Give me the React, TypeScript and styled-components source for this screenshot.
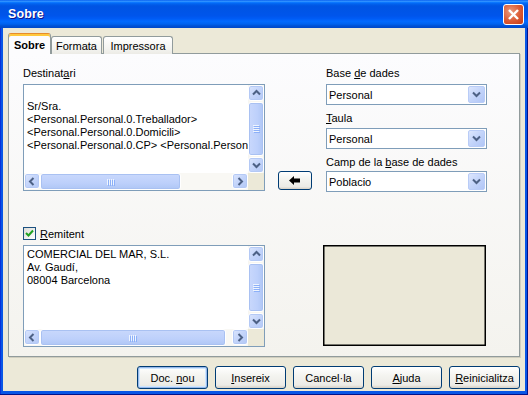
import React from 'react';
import styled, { createGlobalStyle } from 'styled-components';

const Global = createGlobalStyle`
  html, body { margin: 0; padding: 0; }
  body {
    width: 528px; height: 395px; overflow: hidden;
    font-family: "Liberation Sans", Arial, sans-serif;
    font-size: 11px; color: #000;
  }
  * { box-sizing: border-box; }
`;

const Window = styled.div`
  width: 528px; height: 395px;
  display: flex; flex-direction: column;
  background: #0856E6;
  box-shadow: inset -1px -1px #00138C, inset 1px 0 #0831D9;
`;

const TitleBar = styled.div`
  height: 28px; flex: none;
  display: flex; align-items: center; justify-content: space-between;
  padding: 0 3px 0 8px;
  background: linear-gradient(180deg, #0058EE 0%, #3593FF 4%, #288EFF 6%, #127DFF 8%, #036FFC 10%, #0262EE 14%, #0057E5 20%, #0054E3 24%, #0055EB 56%, #005BF5 66%, #026AFE 76%, #0062EF 86%, #0052D6 92%, #0048C8 100%);
`;

const Title = styled.span`
  color: #fff; font-weight: bold; font-size: 12.5px;
  text-shadow: 1px 1px #0F1089;
  letter-spacing: 0.1px;
`;

const CloseBtn = styled.div`
  width: 21px; height: 21px; margin-right: 1px;
  border: 1px solid #fff; border-radius: 3px;
  background: radial-gradient(circle at 35% 35%, #EB9A7E 0%, #DB5A34 55%, #C53B15 100%);
  display: flex; align-items: center; justify-content: center;
`;

const Body = styled.div`
  flex: 1;
  margin: 0 3px 4px 3px;
  background: #ECE9D8;
  padding: 5px 5px 2px 5px;
  display: flex; flex-direction: column;
`;

const TabStrip = styled.div`
  display: flex; align-items: flex-end;
  height: 21px; margin-bottom: -1px;
  position: relative; z-index: 1;
`;

const Tab = styled.div<{ $active?: boolean; $w: number; $ml?: number }>`
  width: ${p => p.$w}px;
  height: ${p => (p.$active ? 21 : 18)}px;
  margin-left: ${p => p.$ml ?? 0}px;
  border: 1px solid #919B9C;
  border-bottom: none;
  border-radius: 3px 3px 0 0;
  display: flex; align-items: center; justify-content: center;
  font-weight: ${p => (p.$active ? 'bold' : 'normal')};
  background: ${p => (p.$active ? '#FCFCFE' : 'linear-gradient(180deg, #FFFFFF, #F3F3EF 70%, #ECEBE6)')};
  ${p => p.$active && `
    border-top: 1px solid #E68B2C;
    box-shadow: inset 0 2px 0 #FFC83C;
    padding-top: 2px;
  `}
`;

const Panel = styled.div`
  height: 304px; flex: none;
  border: 1px solid #919B9C;
  background: linear-gradient(180deg, #FCFCFE, #F4F3EE);
  box-shadow: 1px 1px 0 #D0CEBF;
  padding: 13px 0 0 14px;
  display: flex; flex-direction: column;
`;

const Row = styled.div<{ $mt?: number }>`
  display: flex; align-items: flex-start;
  margin-top: ${p => p.$mt ?? 0}px;
`;

const Col = styled.div<{ $w: number }>`
  width: ${p => p.$w}px;
  display: flex; flex-direction: column;
`;

const Middle = styled.div`
  width: 61px; align-self: flex-end;
  padding-left: 13px; padding-bottom: 2px;
`;

const Label = styled.div<{ $mb?: number }>`
  height: 13px; line-height: 13px;
  margin-bottom: ${p => p.$mb ?? 4}px;
  white-space: nowrap;
`;

const ScrollBox = styled.div<{ $h: number }>`
  height: ${p => p.$h}px;
  border: 1px solid #7F9DB9;
  background: #fff;
  display: grid;
  grid-template-columns: 1fr 16px;
  grid-template-rows: 1fr 17px;
`;

const TextContent = styled.div`
  padding: 2px 3px;
  line-height: 13px;
  white-space: pre;
  overflow: hidden;
`;

const VTrack = styled.div`
  background: #F7F6F1;
  display: flex; flex-direction: column;
`;

const HTrack = styled.div`
  background: #F9F8F4;
  display: flex;
`;

const Spacer = styled.div`
  flex: 1;
`;

const SBtn = styled.div`
  width: 16px; height: 16px; flex: none;
  border: 1px solid #fff;
  border-radius: 3px;
  background: linear-gradient(135deg, #DCE6FD, #C3D4FA 50%, #B3C8F6);
  box-shadow: inset 0 0 0 1px #B4C9F5;
  display: flex; align-items: center; justify-content: center;
`;

const Thumb = styled.div<{ $vertical?: boolean }>`
  flex: ${p => (p.$vertical ? 1 : 'none')};
  margin: ${p => (p.$vertical ? '1px 0' : '0')};
  border: 1px solid #fff;
  border-radius: 3px;
  background: ${p => (p.$vertical
    ? 'linear-gradient(90deg, #C9D8FC, #BDD0FB 60%, #AFC6F5)'
    : 'linear-gradient(180deg, #C9D8FC, #BDD0FB 60%, #AFC6F5)')};
  box-shadow: inset 0 0 0 1px #A9C1F2;
  display: flex; align-items: center; justify-content: center;
`;

const Corner = styled.div`
  background: #ECE9D8;
`;

const Combo = styled.div<{ $mb?: number }>`
  height: 21px;
  border: 1px solid #7F9DB9;
  background: #fff;
  display: flex; align-items: center; justify-content: space-between;
  padding-left: 2px;
  margin-bottom: ${p => p.$mb ?? 0}px;
`;

const ComboBtn = styled.div`
  width: 17px; height: 17px; margin-right: 1px;
  border-radius: 2px;
  border: 1px solid #B9CCF7;
  background: linear-gradient(135deg, #DCE6FD, #C3D4FA 50%, #B1C6F6);
  display: flex; align-items: center; justify-content: center;
`;

const PushBtn = styled.div<{ $w: number; $h: number; $default?: boolean }>`
  width: ${p => p.$w}px; height: ${p => p.$h}px;
  border: 1px solid #003C74;
  border-radius: 3px;
  background: linear-gradient(180deg, #FFFFFF, #F4F4F0 40%, #ECEBE6 86%, #D6D0C5);
  display: flex; align-items: center; justify-content: center;
  white-space: nowrap;
  ${p => p.$default && `
    box-shadow: inset 0 0 0 1px #98B8EA, inset 0 0 0 2px #CEE7FF;
  `}
`;

const CheckRow = styled.div`
  display: flex; align-items: center; gap: 4px;
  height: 13px; margin-bottom: 5px;
`;

const CheckBox = styled.div`
  width: 13px; height: 13px;
  border: 1px solid #1C5180;
  background: linear-gradient(135deg, #DCDCD7, #FFFFFF);
  display: flex; align-items: center; justify-content: center;
`;

const Preview = styled.div`
  width: 163px; height: 101px;
  margin-top: 18px; margin-left: 58px;
  border: 1px solid #000;
  box-shadow: inset 0 0 0 0.5px #000;
  background: #EBE8D8;
`;

const ButtonRow = styled.div`
  display: flex; justify-content: flex-end; gap: 7px;
  margin-top: 9px;
`;

const Chevron = ({ dir }: { dir: 'up' | 'down' | 'left' | 'right' }) => {
  const pts = {
    up: '1,5.5 4.5,2 8,5.5',
    down: '1,2.5 4.5,6 8,2.5',
    left: '5.5,1 2,4.5 5.5,8',
    right: '2.5,1 6,4.5 2.5,8',
  }[dir];
  return (
    <svg width="9" height="9" viewBox="0 0 9 9">
      <polyline points={pts} fill="none" stroke="#4D6185" strokeWidth="2" />
    </svg>
  );
};

const Grip = ({ vertical }: { vertical?: boolean }) => (
  <svg width="8" height="8" viewBox="0 0 8 8">
    {[0, 2, 4, 6].map(i =>
      vertical ? (
        <g key={i}>
          <line x1="1" y1={i + 0.5} x2="7" y2={i + 0.5} stroke="#EEF4FE" />
          <line x1="2" y1={i + 1.5} x2="8" y2={i + 1.5} stroke="#8CB0F8" />
        </g>
      ) : (
        <g key={i}>
          <line x1={i + 0.5} y1="1" x2={i + 0.5} y2="7" stroke="#EEF4FE" />
          <line x1={i + 1.5} y1="2" x2={i + 1.5} y2="8" stroke="#8CB0F8" />
        </g>
      )
    )}
  </svg>
);

const TextBox = ({ h, lines, thumb }: { h: number; lines: string[]; thumb: number }) => (
  <ScrollBox $h={h}>
    <TextContent>{lines.join('\n')}</TextContent>
    <VTrack>
      <SBtn><Chevron dir="up" /></SBtn>
      <Thumb $vertical><Grip vertical /></Thumb>
      <SBtn><Chevron dir="down" /></SBtn>
    </VTrack>
    <HTrack>
      <SBtn><Chevron dir="left" /></SBtn>
      <Thumb style={{ width: `${thumb}px` }}><Grip /></Thumb>
      <Spacer />
      <SBtn><Chevron dir="right" /></SBtn>
    </HTrack>
    <Corner />
  </ScrollBox>
);

const ComboBox = ({ value, mb }: { value: string; mb?: number }) => (
  <Combo $mb={mb}>
    <span>{value}</span>
    <ComboBtn><Chevron dir="down" /></ComboBtn>
  </Combo>
);

export default function App() {
  return (
    <>
      <Global />
      <Window>
        <TitleBar>
          <Title>Sobre</Title>
          <CloseBtn>
            <svg width="13" height="13" viewBox="0 0 13 13">
              <line x1="2" y1="2" x2="11" y2="11" stroke="#fff" strokeWidth="2.4" />
              <line x1="11" y1="2" x2="2" y2="11" stroke="#fff" strokeWidth="2.4" />
            </svg>
          </CloseBtn>
        </TitleBar>
        <Body>
          <TabStrip>
            <Tab $active $w={43}>Sobre</Tab>
            <Tab $w={51}>Formata</Tab>
            <Tab $w={70} $ml={1}>Impressora</Tab>
          </TabStrip>
          <Panel>
            <Row>
              <Col $w={242}>
                <Label>Destinat<u>a</u>ri</Label>
                <TextBox
                  h={107}
                  thumb={141}
                  lines={[
                    '',
                    'Sr/Sra.',
                    '<Personal.Personal.0.Treballador>',
                    '<Personal.Personal.0.Domicili>',
                    '<Personal.Personal.0.CP> <Personal.Personal.0.Poblacio>',
                  ]}
                />
              </Col>
              <Middle>
                <PushBtn $w={34} $h={19}>
                  <svg width="12" height="9" viewBox="0 0 12 9">
                    <polygon points="0,4.5 5,0 5,2.5 11,2.5 11,6.5 5,6.5 5,9" fill="#000" />
                  </svg>
                </PushBtn>
              </Middle>
              <Col $w={161}>
                <Label>Base <u>d</u>e dades</Label>
                <ComboBox value="Personal" mb={7} />
                <Label $mb={3}><u>T</u>aula</Label>
                <ComboBox value="Personal" mb={7} />
                <Label $mb={2}>Camp de la <u>b</u>ase de dades</Label>
                <ComboBox value="Poblacio" />
              </Col>
            </Row>
            <Row $mt={35}>
              <Col $w={242}>
                <CheckRow>
                  <CheckBox>
                    <svg width="9" height="9" viewBox="0 0 9 9">
                      <polyline points="1,4 3.5,6.5 8,1.5" fill="none" stroke="#21A121" strokeWidth="2" />
                    </svg>
                  </CheckBox>
                  <span><u>R</u>emitent</span>
                </CheckRow>
                <TextBox
                  h={102}
                  thumb={186}
                  lines={['COMERCIAL DEL MAR, S.L.', 'Av. Gaudí,', '08004 Barcelona']}
                />
              </Col>
              <Preview />
            </Row>
          </Panel>
          <ButtonRow>
            <PushBtn $w={71} $h={23} $default><span>Doc. <u>n</u>ou</span></PushBtn>
            <PushBtn $w={71} $h={23}><span><u>I</u>nsereix</span></PushBtn>
            <PushBtn $w={71} $h={23}><span>Cancel·la</span></PushBtn>
            <PushBtn $w={71} $h={23}><span><u>A</u>juda</span></PushBtn>
            <PushBtn $w={71} $h={23}><span><u>R</u>einicialitza</span></PushBtn>
          </ButtonRow>
        </Body>
      </Window>
    </>
  );
}
